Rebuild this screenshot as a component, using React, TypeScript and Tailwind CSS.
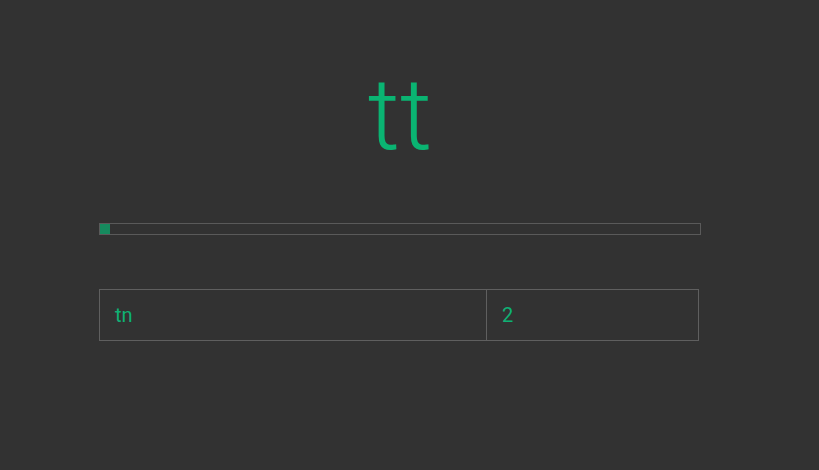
export default function App() {
  return (
    <div className="w-[819px] h-[470px] bg-[#323232] flex flex-col pl-[99px]" style={{ fontFamily: 'Roboto, "Liberation Sans", Arial, sans-serif' }}>
      <div className="w-[602px] flex flex-col">
        <h1 className="mt-[60px] text-center text-[#0ab472] text-[100px] leading-[110px] font-light">tt</h1>
        <div className="mt-[53px] w-[602px] h-[12px] border border-[#5a5a5a] flex">
          <div className="w-[10px] h-full bg-[#168a5e]" />
        </div>
        <table className="mt-[54px] w-[600px] border-collapse text-[#0fb174] text-[20px]">
          <tbody>
            <tr className="h-[51px]">
              <td className="w-[387px] border border-[#5f5f5f] pl-[15px]">tn</td>
              <td className="border border-[#5f5f5f] pl-[15px]">2</td>
            </tr>
          </tbody>
        </table>
      </div>
    </div>
  );
}
